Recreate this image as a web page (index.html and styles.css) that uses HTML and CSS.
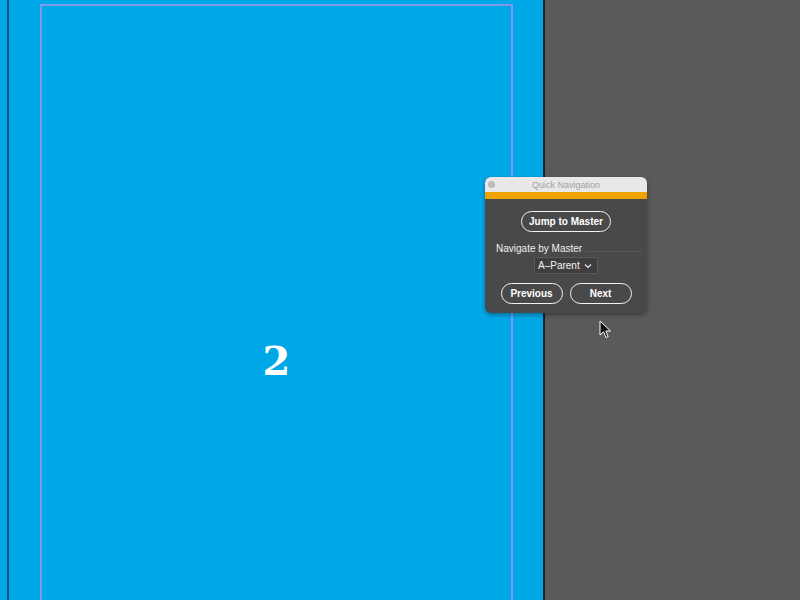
FILE: index.html
```html
<!DOCTYPE html>
<html>
<head>
<meta charset="utf-8">
<link rel="stylesheet" href="styles.css">
</head>
<body>
<div class="workspace">
  <div class="spread">
    <div class="bleed-edge"></div>
    <div class="margins">
      <div class="page-number">2</div>
    </div>
  </div>
  <div class="spread-edge"></div>
  <div class="pasteboard"></div>
</div>

<div class="panel">
  <div class="titlebar">
    <span class="close-dot"></span>
    <span class="title">Quick Navigation</span>
  </div>
  <div class="accent"></div>
  <div class="panel-body">
    <div class="row center">
      <button class="pill jump">Jump to Master</button>
    </div>
    <div class="label-row">
      <span class="label">Navigate by Master</span>
      <span class="rule"></span>
    </div>
    <div class="row center">
      <div class="select">
        <span>A–Parent</span>
        <svg width="8" height="6" viewBox="0 0 8 6"><path d="M1 1.5 L4 4.5 L7 1.5" fill="none" stroke="#e6e6e6" stroke-width="1.2"/></svg>
      </div>
    </div>
    <div class="row nav">
      <button class="pill nav-btn">Previous</button>
      <button class="pill nav-btn">Next</button>
    </div>
  </div>
</div>

<svg class="cursor" width="14" height="20" viewBox="0 0 14 20">
  <path d="M1 1 L1 15 L4.5 11.8 L7 17.5 L9.2 16.6 L6.8 11 L11.5 11 Z" fill="#111" stroke="#fff" stroke-width="1" stroke-linejoin="round"/>
</svg>
</body>
</html>
```

FILE: styles.css
```css
html, body {
  margin: 0;
  padding: 0;
  width: 800px;
  height: 600px;
  overflow: hidden;
  font-family: "Liberation Sans", Arial, sans-serif;
}

.workspace {
  display: flex;
  width: 800px;
  height: 600px;
}

.spread {
  width: 543px;
  height: 600px;
  background: #00a7e6;
  display: flex;
  overflow: hidden;
}

.bleed-edge {
  width: 2px;
  margin-left: 7px;
  background: #1a5582;
}

.margins {
  margin-left: 31px;
  margin-top: 4px;
  width: 473px;
  height: 700px;
  border: 2px solid #7f97ee;
  border-bottom: none;
  box-sizing: border-box;
  text-align: center;
  padding-top: 330px;
}

.page-number {
  font-family: "DejaVu Serif", "Liberation Serif", serif;
  font-weight: bold;
  font-size: 40px;
  color: #ffffff;
  line-height: 50px;
}

.spread-edge {
  width: 2px;
  background: #13232d;
}

.pasteboard {
  flex: 1;
  background: #5a5a5a;
}

.panel {
  position: absolute;
  left: 485px;
  top: 177px;
  width: 162px;
  height: 136px;
  border-radius: 6px;
  overflow: hidden;
  background: #494949;
  box-shadow: 0 2px 4px rgba(0,0,0,0.35);
}

.titlebar {
  height: 15px;
  background: #e9e7e7;
  display: flex;
  align-items: center;
}

.close-dot {
  width: 7px;
  height: 7px;
  border-radius: 50%;
  background: #bdbcbc;
  margin-left: 3px;
}

.title {
  flex: 1;
  text-align: center;
  font-size: 9px;
  color: #a2a1a1;
  margin-right: 10px;
}

.accent {
  height: 7px;
  background: #f0a300;
}

.panel-body {
  padding-top: 12px;
}

.row {
  display: flex;
}

.center {
  justify-content: center;
}

.pill {
  background: transparent;
  border: 1.5px solid #f2f2f2;
  border-radius: 11px;
  color: #ffffff;
  font-family: "Liberation Sans", Arial, sans-serif;
  font-size: 10px;
  font-weight: bold;
  padding: 0;
  height: 21px;
  box-sizing: border-box;
}

.jump {
  width: 90px;
}

.label-row {
  display: flex;
  align-items: center;
  margin-top: 10px;
  padding-left: 11px;
  height: 13px;
}

.label {
  font-size: 10px;
  color: #f0f0f0;
  white-space: nowrap;
}

.rule {
  flex: 1;
  height: 1px;
  background: #555555;
  margin: 5px 4px 0 3px;
}

.select {
  margin-top: 2px;
  width: 64px;
  height: 17px;
  box-sizing: border-box;
  background: #3e3e3e;
  border: 1px solid #5a5a5a;
  border-radius: 2px;
  display: flex;
  align-items: center;
  justify-content: space-between;
  padding: 0 5px 0 3px;
  font-size: 10px;
  color: #f4f4f4;
}

.nav {
  justify-content: center;
  gap: 7px;
  margin-top: 9px;
}

.nav-btn {
  width: 62px;
}

.cursor {
  position: absolute;
  left: 599px;
  top: 320px;
}
```
